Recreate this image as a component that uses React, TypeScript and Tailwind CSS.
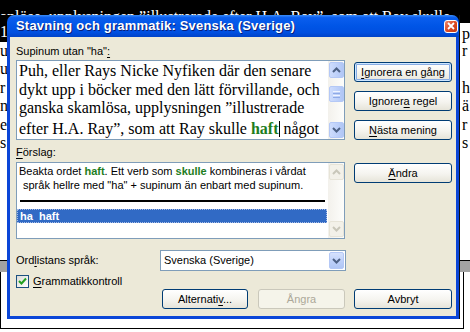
import React from "react";

const ui = "font-['Liberation_Sans',Arial,sans-serif] text-[11px] text-black";

// small accelerator-key underline
const U = ({ children }: { children: React.ReactNode }) => (
  <span className="underline underline-offset-[2px]">{children}</span>
);

const Chevron = ({ up, color }: { up?: boolean; color: string }) => (
  <svg width="9" height="6" viewBox="0 0 9 6">
    <path
      d={up ? "M1 5 L4.5 1.5 L8 5" : "M1 1 L4.5 4.5 L8 1"}
      fill="none"
      stroke={color}
      strokeWidth="2"
    />
  </svg>
);

const ScrollBtn = ({ up, disabled }: { up?: boolean; disabled?: boolean }) => (
  <div
    className={
      disabled
        ? "flex h-[16px] w-[15px] items-center justify-center rounded-[2px] border border-[#e7e4d8] bg-[#f3f1e9]"
        : "flex h-[16px] w-[15px] items-center justify-center rounded-[2px] border border-[#b4c8f6] bg-[linear-gradient(90deg,#cddcfd_0%,#bccff9_60%,#b0c6f5_100%)]"
    }
  >
    <Chevron up={up} color={disabled ? "#c9c7ba" : "#4d6185"} />
  </div>
);

const Scrollbar = ({ disabled }: { disabled?: boolean }) => (
  <div className="flex w-[16px] flex-col justify-between bg-[linear-gradient(90deg,#f3f1ec_0%,#fdfdfb_100%)] py-[1px] pl-[1px]">
    <ScrollBtn up disabled={disabled} />
    {!disabled && (
      <div className="mb-auto mt-[8px] flex h-[16px] w-[15px] flex-col items-center justify-center gap-[1px] rounded-[2px] border border-[#b4c8f6] bg-[linear-gradient(90deg,#cddcfd_0%,#bccff9_60%,#b0c6f5_100%)]">
        <div className="h-[1px] w-[7px] bg-[#eef3fe]" />
        <div className="h-[1px] w-[7px] bg-[#8faae6]" />
        <div className="h-[1px] w-[7px] bg-[#eef3fe]" />
        <div className="h-[1px] w-[7px] bg-[#8faae6]" />
      </div>
    )}
    <ScrollBtn disabled={disabled} />
  </div>
);

const Btn = ({
  children,
  w,
  def,
  disabled,
}: {
  children: React.ReactNode;
  w: string;
  def?: boolean;
  disabled?: boolean;
}) => {
  let cls =
    "flex h-[20px] items-center justify-center rounded-[3px] border border-[#003c74] bg-[linear-gradient(180deg,#ffffff_0%,#f5f4ef_55%,#e6e4d9_100%)] ";
  if (def) cls += "shadow-[inset_0_0_0_1px_#cee7ff,inset_0_0_0_2px_#89ade4] ";
  if (disabled)
    cls =
      "flex h-[20px] items-center justify-center rounded-[3px] border border-[#cac8bb] bg-[#f5f4ea] text-[#aca899] ";
  return (
    <div className={cls + w}>
      <span className="whitespace-pre">{children}</span>
    </div>
  );
};

const docRows: [string, string][] = [
  ["u", "r"],
  ["u", ""],
  ["r", "h"],
  ["n", "ä"],
  ["e", "r"],
  ["s", "s"],
];

export default function App() {
  return (
    <div className="relative h-[332px] w-[470px] overflow-hidden bg-white">
      {/* document behind the dialog */}
      <div className="flex flex-col font-['Liberation_Serif','Times_New_Roman',serif] text-[16px] leading-[18.5px]">
        <div className="h-[15px] overflow-hidden whitespace-nowrap bg-black pt-[8px] text-white">
          anlöse, upplysningen ”illustrerade efter H.A. Ray”, som att Ray skulle
        </div>
        <div className="h-[8px] bg-black" />
        <div className="flex h-[18.5px] justify-between">
          <span className="w-[9px] bg-black text-white">1</span>
          <span className="w-[8px] pt-[2px]">p</span>
        </div>
        {docRows.map(([l, r], i) => (
          <div key={i} className="flex h-[18.5px] justify-between">
            <span className="w-[9px]">{l}</span>
            <span className="w-[8px]">{r}</span>
          </div>
        ))}
        <div className="h-[107px]" />
        <div className="h-[12px] border-t border-black bg-[#a2a2a2]" />
        <div className="h-[57px] w-[464px] border-x border-b border-black" />
      </div>

      {/* dialog window */}
      <div className={"absolute left-[7px] top-[15px] w-[452px] shadow-[1px_0_0_#111] " + ui}>
        <div className="flex h-[22px] items-center justify-between rounded-t-[7px] bg-[linear-gradient(180deg,#3d8ef8_0%,#0a5eee_12%,#0055e6_50%,#004fe0_80%,#0043c8_100%)] pl-[9px] pr-[1px]">
          <span className="font-['Liberation_Sans',Arial,sans-serif] text-[13px] font-bold tracking-[0.2px] text-white [text-shadow:1px_1px_0_#0a1e78]">
            Stavning och grammatik: Svenska (Sverige)
          </span>
          <div className="flex h-[13px] w-[14px] items-center justify-center rounded-[3px] border border-white bg-[linear-gradient(135deg,#f08a6c_0%,#dd4a24_50%,#c13a14_100%)]">
            <svg width="8" height="8" viewBox="0 0 8 8">
              <path d="M1 1 L7 7 M7 1 L1 7" stroke="#fff" strokeWidth="1.8" />
            </svg>
          </div>
        </div>

        <div className="flex flex-col border-x-[3px] border-b-[3px] border-[#0b46d8] bg-[#ece9d8] pb-[7px] pl-[6px] pr-[4px] pt-[8px]">
          {/* row 1 */}
          <div className="flex gap-[8px]">
            <div className="flex w-[330px] flex-col">
              <div className="h-[13px] leading-[13px]">
                Supinum utan "ha"<U>:</U>
              </div>
              <div className="mt-[2px] flex h-[80px] w-[329px] border border-[#7f9db9] bg-white">
                <div className="flex-1 overflow-hidden whitespace-nowrap pl-[2px] pt-[1px] font-['Liberation_Serif','Times_New_Roman',serif] text-[16px] leading-[18.6px]">
                  <div>Puh, eller Rays Nicke Nyfiken där den senare</div>
                  <div>dykt upp i böcker med den lätt förvillande, och</div>
                  <div>ganska skamlösa, upplysningen ”illustrerade</div>
                  <div>
                    efter H.A. Ray”, som att Ray skulle{" "}
                    <b className="text-[#1e7d1e]">haft</b>
                    <span className="inline-block h-[16px] w-[1px] translate-y-[3px] bg-black" /> något
                  </div>
                </div>
                <Scrollbar />
              </div>
            </div>
            <div className="flex w-[98px] flex-col gap-[9px] pt-[17px]">
              <Btn w="w-[98px]" def>
                <U>I</U>gnorera en gång
              </Btn>
              <Btn w="w-[98px]">
                Ignorer<U>a</U> regel
              </Btn>
              <Btn w="w-[98px]">
                <U>N</U>ästa mening
              </Btn>
            </div>
          </div>

          {/* row 2 */}
          <div className="mt-[6px] flex gap-[8px]">
            <div className="flex w-[330px] flex-col">
              <div className="h-[13px] leading-[13px]">
                <U>F</U>örslag:
              </div>
              <div className="mt-[3px] flex h-[77px] w-[329px] border border-[#7f9db9] bg-white">
                <div className="flex flex-1 flex-col pt-[1px] leading-[14px]">
                  <div className="pl-[2px]">
                    Beakta ordet <b className="text-[#1e7d1e]">haft</b>. Ett verb som{" "}
                    <b className="text-[#1e7d1e]">skulle</b> kombineras i vårdat
                  </div>
                  <div className="pl-[6px]">språk hellre med "ha" + supinum än enbart med supinum.</div>
                  <div className="ml-[3px] mr-[3px] mt-[8px] h-[1.5px] bg-black" />
                  <div className="mr-[1px] mt-[7px] h-[14px] whitespace-pre border border-dotted border-[#a9bde6] bg-[#316ac5] pl-[2px] font-bold leading-[12px] text-white">
                    ha  haft
                  </div>
                </div>
                <Scrollbar disabled />
              </div>
            </div>
            <div className="flex w-[98px] flex-col pt-[17px]">
              <Btn w="w-[98px]">
                <U>Ä</U>ndra
              </Btn>
            </div>
          </div>

          {/* row 3 */}
          <div className="mt-[11px] flex items-center">
            <div className="w-[144px]">
              Ord<U>l</U>istans språk:
            </div>
            <div className="flex h-[21px] w-[186px] items-center justify-between border border-[#7f9db9] bg-white pl-[3px] pr-[1px]">
              <span>Svenska (Sverige)</span>
              <div className="flex h-[17px] w-[15px] items-center justify-center rounded-[2px] border border-[#b4c8f6] bg-[linear-gradient(180deg,#d6e2fd_0%,#bccff9_60%,#b0c6f5_100%)]">
                <Chevron color="#4d6185" />
              </div>
            </div>
          </div>

          {/* row 4 */}
          <div className="mt-[4px] flex h-[13px] items-center">
            <div className="flex h-[13px] w-[13px] items-center justify-center border border-[#1c5180] bg-[linear-gradient(135deg,#dcdcd7_0%,#ffffff_100%)]">
              <svg width="9" height="9" viewBox="0 0 9 9">
                <path d="M1 4 L3.5 6.5 L8 1.5" fill="none" stroke="#21a121" strokeWidth="2" />
              </svg>
            </div>
            <span className="ml-[4px]">
              <U>G</U>rammatikkontroll
            </span>
          </div>

          {/* row 5 */}
          <div className="mt-[1px] flex justify-end">
            <Btn w="w-[86px]">
              Alternati<U>v</U>...
            </Btn>
            <div className="ml-[10px]">
              <Btn w="w-[87px]" disabled>
                Ångra
              </Btn>
            </div>
            <div className="ml-[9px]">
              <Btn w="w-[98px]">Avbryt</Btn>
            </div>
          </div>
        </div>
      </div>
    </div>
  );
}
